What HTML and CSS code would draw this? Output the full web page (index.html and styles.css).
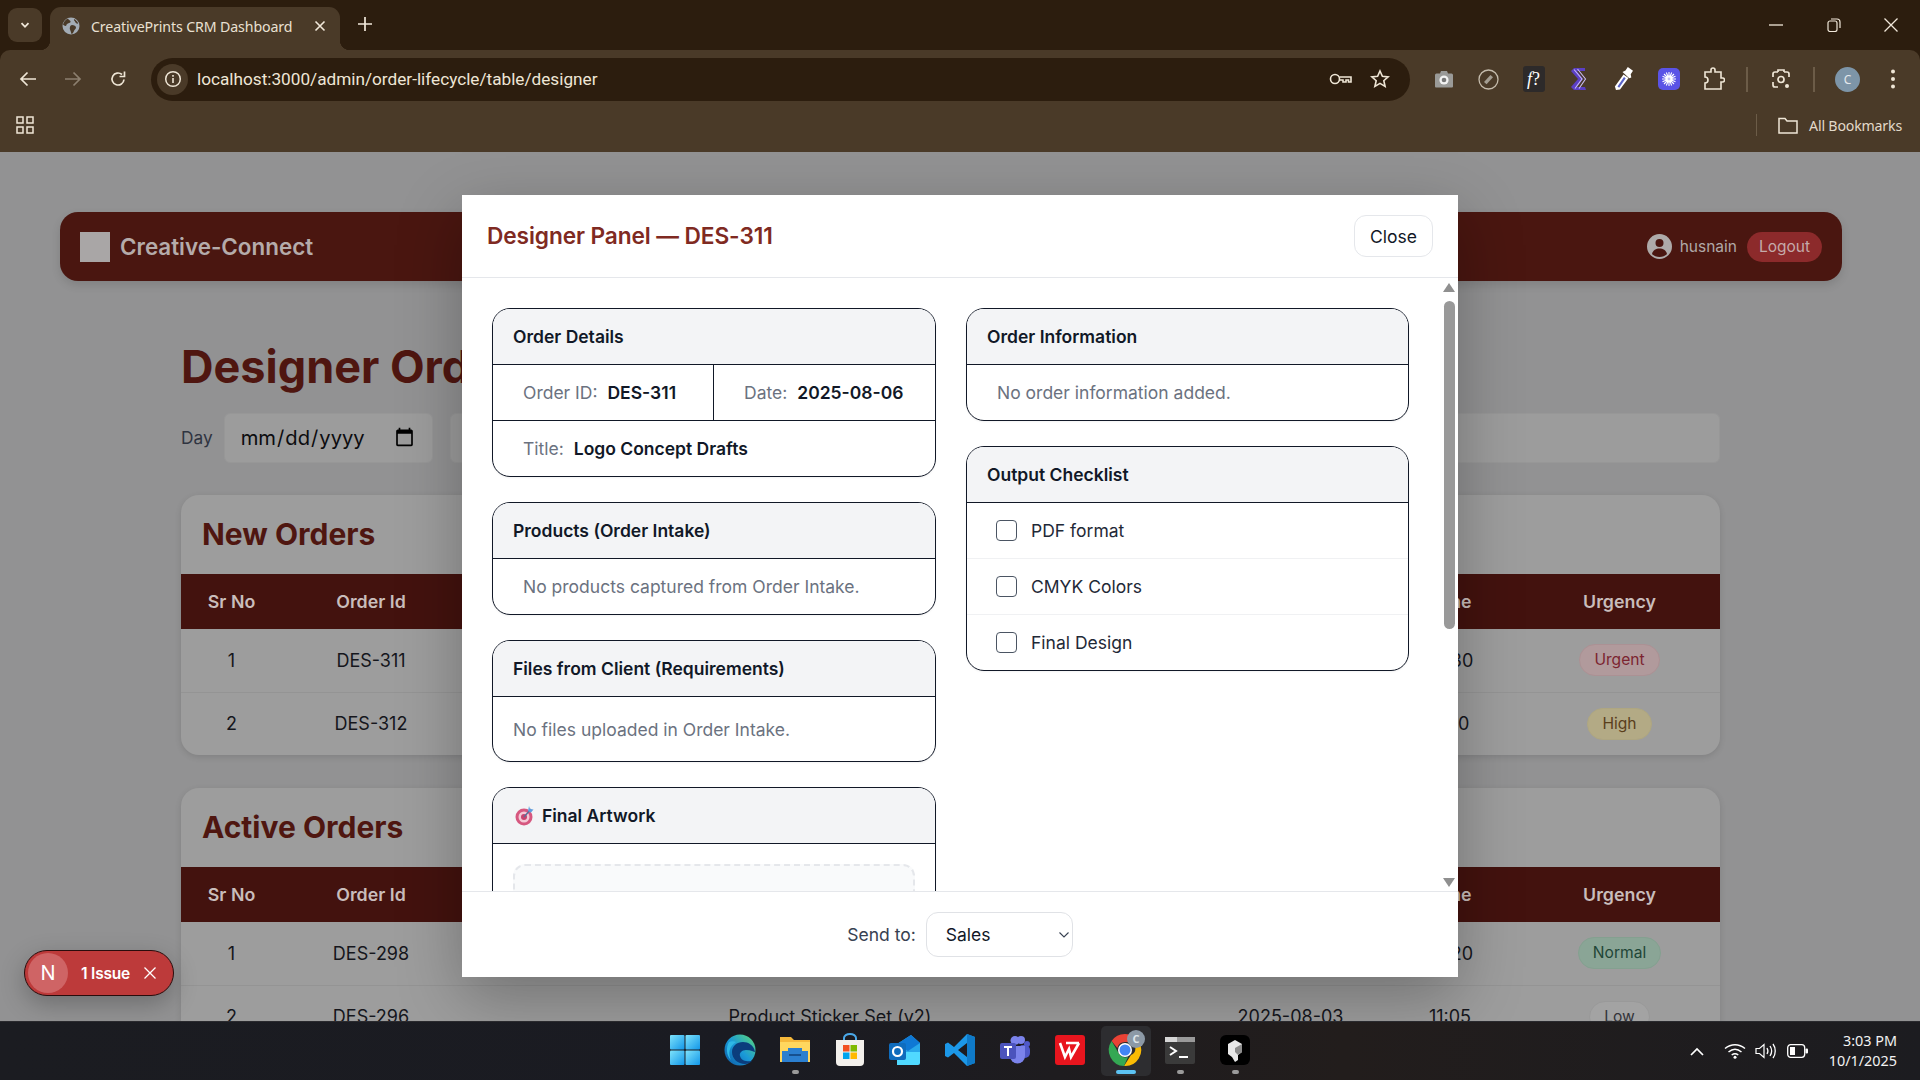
FILE: index.html
```html
<!DOCTYPE html>
<html lang="en">
<head>
<meta charset="utf-8">
<title>CreativePrints CRM Dashboard</title>
<link rel="stylesheet" href="styles.css">
</head>
<body>
<div class="window">
  <header class="browser">
    <div class="tabstrip">
      <button class="tabsearch"><svg width="12" height="12" viewBox="0 0 12 12"><path d="M2.5 4.2 6 7.8l3.5-3.6" fill="none" stroke="#f1e8da" stroke-width="1.8"/></svg></button>
      <div class="tab">
        <svg class="globe" width="18" height="18" viewBox="0 0 18 18"><circle cx="9" cy="9" r="8.5" fill="#a3acb5"/><path d="M6 1.5c1 2 3 2 2.5 3.5S5 6 4.500 8 2 8.500 1 7.500C1.500 5 3.500 2.500 6 1.500ZM10 8c2 0 4 1 4 2.500s-1.500 2-2 3.500-1.500 3-2.500 3c-.5-2-1-3-1.500-4.500S8 8 10 8ZM12 2c2 1 3.500 2.500 4.200 4.500-1.500.5-2.700-.5-3-1.500S11.500 3.500 12 2Z" fill="#4a3a28"/></svg>
        <span class="tabtitle">CreativePrints CRM Dashboard</span>
        <svg width="12" height="12" viewBox="0 0 12 12"><path d="m1.500 1.500 9 9m0-9-9 9" stroke="#f1e8da" stroke-width="1.600"/></svg>
      </div>
      <svg class="newtab" width="14" height="14" viewBox="0 0 14 14"><path d="M7 0v14M0 7h14" stroke="#f1e8da" stroke-width="1.700"/></svg>
      <div class="winctrls">
        <svg width="14" height="14" viewBox="0 0 14 14"><path d="M0 7h14" stroke="#f1e8da" stroke-width="1.300"/></svg>
        <svg width="14" height="14" viewBox="0 0 14 14"><rect x="1" y="3" width="9" height="10.500" rx="2" fill="none" stroke="#f1e8da" stroke-width="1.200"/><path d="M4 1h6c2 0 3 1 3 3v6" fill="none" stroke="#f1e8da" stroke-width="1.200"/></svg>
        <svg width="14" height="14" viewBox="0 0 14 14"><path d="m.5.500 13 13m0-13-13 13" stroke="#f1e8da" stroke-width="1.300"/></svg>
      </div>
    </div>
    <div class="toolbar">
      <span class="slot"><svg width="18" height="18" viewBox="0 0 18 18"><path d="M17 9H2m6.500-6.500L2 9l6.500 6.500" fill="none" stroke="#efe6d6" stroke-width="1.700"/></svg></span>
      <span class="slot"><svg width="18" height="18" viewBox="0 0 18 18"><path d="M1 9h15M9.500 2.500 16 9l-6.500 6.500" fill="none" stroke="#8c7f6f" stroke-width="1.700"/></svg></span>
      <span class="slot"><svg width="18" height="18" viewBox="0 0 18 18"><path d="M15 9.500A6 6 0 1 1 13 4.500" fill="none" stroke="#efe6d6" stroke-width="1.700"/><path d="M15.500 1.500v5h-5" fill="none" stroke="#efe6d6" stroke-width="1.700"/></svg></span>
      <div class="urlbar">
        <span class="infobtn"><svg width="18" height="18" viewBox="0 0 18 18"><circle cx="9" cy="9" r="7.300" fill="none" stroke="#efe6d6" stroke-width="1.500"/><path d="M9 8v5M9 5v1.700" stroke="#efe6d6" stroke-width="1.600"/></svg></span>
        <span class="url">localhost:3000/admin/order-lifecycle/table/designer</span>
        <svg class="keyicon" width="24" height="14" viewBox="0 0 24 14"><circle cx="6" cy="7" r="4.500" fill="none" stroke="#efe6d6" stroke-width="1.600"/><path d="M10.500 5H22v5h-2.500V8H17v2h-3V8h-3.500" fill="none" stroke="#efe6d6" stroke-width="1.600"/></svg>
        <svg class="staricon" width="20" height="20" viewBox="0 0 20 20"><path d="m10 2 2.400 5.300 5.700.6-4.300 3.800 1.300 5.700-5.100-3-5.100 3 1.300-5.700L1.900 7.900l5.700-.6Z" fill="none" stroke="#efe6d6" stroke-width="1.600"/></svg>
      </div>
      <span class="slot first"><svg width="20" height="18" viewBox="0 0 20 18"><path d="M1 5a1.500 1.500 0 0 1 1.500-1.500H6L7 1h6l1 2.500h3.500A1.500 1.500 0 0 1 19 5v11.500a1 1 0 0 1-1 1H2a1 1 0 0 1-1-1Z" fill="#9a9a98"/><circle cx="10" cy="10" r="4.600" fill="#f2f2f2"/><circle cx="10" cy="10" r="2.300" fill="#777"/></svg></span>
      <span class="slot"><svg width="21" height="21" viewBox="0 0 21 21"><circle cx="10.500" cy="10.500" r="9.500" fill="none" stroke="#c4bbac" stroke-width="1.300"/><path d="m6 13 6.500-7 2.500 2.300-6.500 7Z" fill="#a39d92"/></svg></span>
      <span class="slot"><span class="ext-f"><i>f</i>?</span></span>
      <span class="slot"><svg width="18" height="24" viewBox="0 0 18 24"><path d="M15 1H4L1 4l7 8-7 8 3 3h12l-1-3H7l6-8-6-8h8Z" fill="#5b3fc4"/><path d="M4 2.500 12 12l-7 9.500M7.500 2 15.500 12 9 21.500" fill="none" stroke="#c9bcf3" stroke-width="1.100"/></svg></span>
      <span class="slot"><svg width="20" height="24" viewBox="0 0 20 24"><path d="M2 23 .9 19.500 9.500 7.500l5 3.500-8.500 11.500Z" fill="#fff"/><path d="m3.500 19.500 6.500-9.500 1.700 1.200-6.500 9.500Z" fill="#5a63c9"/><path d="m8.500 5 3-1.500L13.800 0 19 3.700l-2.300 3.600.6 3.200-2 .7Z" fill="#fff"/></svg></span>
      <span class="slot"><svg width="22" height="22" viewBox="0 0 22 22"><rect width="22" height="22" rx="5" fill="#5a53e6"/><g stroke="#fff" stroke-width="1.100"><path d="M11 4v14M4 11h14M6 6l10 10M16 6 6 16M8.300 4.500l5.400 13M13.700 4.500l-5.400 13M4.500 8.300l13 5.400M17.500 8.300l-13 5.400"/></g><circle cx="11" cy="11" r="3.600" fill="#fff"/><circle cx="11" cy="11" r="1.400" fill="#5a53e6" opacity=".35"/></svg></span>
      <span class="slot"><svg width="22" height="24" viewBox="0 0 22 24"><path d="M2 5h6V3a2 2 0 0 1 4 0v2h6v6h1.500a2 2 0 0 1 0 4H18v7H2v-6a3 3 0 0 0 0-6Z" fill="none" stroke="#efe6d6" stroke-width="1.600"/></svg></span>
      <i class="sep"></i>
      <span class="slot"><svg width="20" height="22" viewBox="0 0 20 22"><path d="M7 4H4a2 2 0 0 0-2 2v3m16 0V6a2 2 0 0 0-2-2h-3M2 14v3a2 2 0 0 0 2 2h3" fill="none" stroke="#efe6d6" stroke-width="1.700"/><path d="M7 4V2h6v2" fill="none" stroke="#efe6d6" stroke-width="1.700"/><circle cx="10" cy="11.500" r="3" fill="none" stroke="#efe6d6" stroke-width="1.700"/><circle cx="16" cy="18" r="2" fill="#efe6d6"/></svg></span>
      <i class="sep"></i>
      <span class="slot"><span class="avatar">C</span></span>
      <span class="slot"><svg width="6" height="22" viewBox="0 0 6 22"><g fill="#efe6d6"><circle cx="3" cy="3.500" r="2"/><circle cx="3" cy="11" r="2"/><circle cx="3" cy="18.500" r="2"/></g></svg></span>
    </div>
    <div class="bookmarks">
      <svg class="apps" width="18" height="18" viewBox="0 0 18 18"><g fill="none" stroke="#efe6d6" stroke-width="1.500"><rect x="1" y="1" width="6" height="6"/><rect x="11" y="1" width="6" height="6"/><rect x="1" y="11" width="6" height="6"/><rect x="11" y="11" width="6" height="6"/></g></svg>
      <i class="bsep"></i>
      <svg width="20" height="17" viewBox="0 0 20 17"><path d="M1 1.500h6l2 2.500h10v12H1Z" fill="none" stroke="#efe6d6" stroke-width="1.500"/></svg>
      <span class="bmlabel">All Bookmarks</span>
    </div>
  </header>

  <main class="viewport">
    <div class="page">
      <nav class="appnav">
        <span class="logo"></span>
        <span class="brand">Creative-Connect</span>
        <span class="navuser">
          <svg width="25" height="25" viewBox="0 0 25 25"><circle cx="12.500" cy="12.500" r="12.500" fill="#aeaaa9"/><circle cx="12.500" cy="9" r="4" fill="#4a1610"/><path d="M5 20c1-4 4-5.500 7.500-5.500S19 16 20 20c-2 2-4.500 3-7.500 3S7 22 5 20Z" fill="#4a1610"/></svg>
          husnain
        </span>
        <button class="logout">Logout</button>
      </nav>
      <div class="content">
        <h1 class="pagetitle">Designer Orders</h1>
        <div class="filters">
          <label class="daylabel" for="day">Day</label>
          <input class="dayinput" id="day" type="date">
          <input class="searchinput" type="text" aria-label="Search">
        </div>
        <section class="ordercard">
          <h2 class="cardtitle">New Orders</h2>
          <table class="orders">
            <colgroup><col class="c1"><col class="c2"><col class="c3"><col class="c4"><col class="c5"><col class="c6"></colgroup>
            <thead><tr><th>Sr No</th><th>Order Id</th><th>Title</th><th>Date</th><th>Time</th><th>Urgency</th></tr></thead>
            <tbody>
              <tr><td>1</td><td>DES-311</td><td>Logo Concept Drafts</td><td>2025-08-06</td><td>14:30</td><td><span class="pill urgent">Urgent</span></td></tr>
              <tr><td>2</td><td>DES-312</td><td>Brochure Layout</td><td>2025-08-05</td><td>11:10</td><td><span class="pill high">High</span></td></tr>
            </tbody>
          </table>
        </section>
        <section class="ordercard">
          <h2 class="cardtitle">Active Orders</h2>
          <table class="orders">
            <colgroup><col class="c1"><col class="c2"><col class="c3"><col class="c4"><col class="c5"><col class="c6"></colgroup>
            <thead><tr><th>Sr No</th><th>Order Id</th><th>Title</th><th>Date</th><th>Time</th><th>Urgency</th></tr></thead>
            <tbody>
              <tr><td>1</td><td>DES-298</td><td>Business Card Redesign</td><td>2025-08-04</td><td>16:20</td><td><span class="pill normal">Normal</span></td></tr>
              <tr><td>2</td><td>DES-296</td><td>Product Sticker Set (v2)</td><td>2025-08-03</td><td>11:05</td><td><span class="pill low">Low</span></td></tr>
            </tbody>
          </table>
        </section>
      </div>
    </div>

    <div class="toast">
      <span class="toast-n">N</span>
      <span class="toast-text">1 Issue</span>
      <svg width="14" height="14" viewBox="0 0 14 14"><path d="m1.500 1.500 11 11m0-11-11 11" stroke="#fff" stroke-width="1.300"/></svg>
    </div>

    <div class="modal">
      <div class="modalhead">
        <h3 class="modaltitle">Designer Panel — DES-311</h3>
        <button class="closebtn">Close</button>
      </div>
      <div class="modalbody">
        <div class="column">
          <section class="panel">
            <div class="panelhead">Order Details</div>
            <div class="row split">
              <div class="cell"><span class="lbl">Order ID:</span><b>DES-311</b></div>
              <div class="cell"><span class="lbl">Date:</span><b>2025-08-06</b></div>
            </div>
            <div class="row"><div class="cell"><span class="lbl">Title:</span><b>Logo Concept Drafts</b></div></div>
          </section>
          <section class="panel">
            <div class="panelhead">Products (Order Intake)</div>
            <div class="row"><div class="cell muted">No products captured from Order Intake.</div></div>
          </section>
          <section class="panel">
            <div class="panelhead">Files from Client (Requirements)</div>
            <div class="row tall"><div class="cell muted tight">No files uploaded in Order Intake.</div></div>
          </section>
          <section class="panel">
            <div class="panelhead">
              <svg class="target" width="20" height="20" viewBox="0 0 20 20"><circle cx="9" cy="11" r="8.500" fill="#d6577f"/><circle cx="9" cy="11" r="5.500" fill="#f4c9d6"/><circle cx="9" cy="11" r="3" fill="#c8446f"/><path d="m9 11 7-8" stroke="#5a6f99" stroke-width="1.500"/><path d="m14 0 1 3 3.500.5-2.500 3L13 5Z" fill="#5f9fe0"/></svg>
              Final Artwork
            </div>
            <div class="dropwrap"><div class="dropzone"></div></div>
          </section>
        </div>
        <div class="column">
          <section class="panel">
            <div class="panelhead">Order Information</div>
            <div class="row"><div class="cell muted">No order information added.</div></div>
          </section>
          <section class="panel">
            <div class="panelhead">Output Checklist</div>
            <label class="check"><input type="checkbox"><span>PDF format</span></label>
            <label class="check"><input type="checkbox"><span>CMYK Colors</span></label>
            <label class="check"><input type="checkbox"><span>Final Design</span></label>
          </section>
        </div>
        <div class="fakescroll">
          <i class="arrow up"></i>
          <i class="thumb"></i>
          <i class="arrow down"></i>
        </div>
      </div>
      <div class="modalfoot">
        <label class="sendlabel" for="send">Send to:</label>
        <span class="selectwrap">
          <select class="sendselect" id="send"><option>Sales</option></select>
          <svg class="chev" width="10" height="6" viewBox="0 0 10 6"><path d="m.5.500 4.500 4.500L9.500.500" fill="none" stroke="#374151" stroke-width="1.100"/></svg>
        </span>
      </div>
    </div>
  </main>

  <footer class="taskbar">
    <div class="tbicons">
      <span class="tbi"><svg width="32" height="32" viewBox="0 0 32 32"><defs><linearGradient id="win" x1="0" y1="0" x2="1" y2="1"><stop offset="0" stop-color="#7ee3fb"/><stop offset="1" stop-color="#1296e8"/></linearGradient></defs><rect x="1" y="1" width="14.500" height="14.500" rx="1" fill="url(#win)"/><rect x="16.500" y="1" width="14.500" height="14.500" rx="1" fill="url(#win)"/><rect x="1" y="16.500" width="14.500" height="14.500" rx="1" fill="url(#win)"/><rect x="16.500" y="16.500" width="14.500" height="14.500" rx="1" fill="url(#win)"/></svg></span>
      <span class="tbi"><svg width="32" height="32" viewBox="0 0 32 32"><defs><linearGradient id="edge" x1="0" y1="1" x2="1" y2="0"><stop offset="0" stop-color="#0c59a4"/><stop offset=".5" stop-color="#1a9ad8"/><stop offset="1" stop-color="#5fdb73"/></linearGradient></defs><circle cx="16" cy="16" r="15.500" fill="url(#edge)"/><path d="M31 18c-1-7-7-10-12-10-6 0-11 4-11 10 0 7 6 12 13 12 3 0 5-1 7-3-4 1-11 0-12-5-1-3 2-6 6-6 5 0 8 2 9 2Z" fill="#0b3d7d"/><path d="M5 8c-3 5-3 13 2 18-3-6-2-14 5-18-2-1-5-1-7 0Z" fill="#2fb8e6"/></svg></span>
      <span class="tbi dot"><svg width="32" height="32" viewBox="0 0 32 32"><path d="M1 3h11l3 3h16v22H1Z" fill="#f6b93b"/><path d="M1 8h30v20H1Z" fill="#ffd75e"/><path d="M9 17h14v3H29v11H3V20h6Z" transform="translate(0 -3)" fill="#2b7fd0"/><rect x="10" y="20" width="12" height="2" fill="#16508f"/></svg></span>
      <span class="tbi"><svg width="32" height="34" viewBox="0 0 32 34"><path d="M10 8V5a6 4 0 0 1 12 0v3" fill="none" stroke="#4aa8e8" stroke-width="2"/><path d="M2 7h28v22a4 4 0 0 1-4 4H6a4 4 0 0 1-4-4Z" fill="#f3f0ec"/><rect x="9" y="12" width="6.500" height="6.500" fill="#f25022"/><rect x="16.500" y="12" width="6.500" height="6.500" fill="#7fba00"/><rect x="9" y="19.500" width="6.500" height="6.500" fill="#00a4ef"/><rect x="16.500" y="19.500" width="6.500" height="6.500" fill="#ffb900"/></svg></span>
      <span class="tbi"><svg width="32" height="32" viewBox="0 0 32 32"><path d="M8 10 22 1l9 8v20H8Z" fill="#28a8ea"/><path d="m8 10 14-9 9 8-12 8Z" fill="#0f78d4"/><path d="M8 18h23v11a2 2 0 0 1-2 2H8Z" fill="#50d9ff"/><rect x="0" y="9" width="17" height="17" rx="2" fill="#0f6cbd"/><circle cx="8.500" cy="17.500" r="4.500" fill="none" stroke="#fff" stroke-width="2.200"/></svg></span>
      <span class="tbi"><svg width="32" height="34" viewBox="0 0 32 34"><path fill-rule="evenodd" d="M23 1 10 14 4 9.500 1 11v12l3 1.500L10 20l13 13 8-3V4ZM23 10l-9 7 9 7Z" fill="#1c98e8"/><path d="M23 1v32l8-3V4Z" fill="#0f7ac8"/></svg></span>
      <span class="tbi"><svg width="32" height="32" viewBox="0 0 32 32"><circle cx="22" cy="6" r="4" fill="#7b83eb"/><circle cx="28" cy="10" r="3" fill="#5059c9"/><rect x="19" y="11" width="12" height="13" rx="5" fill="#5059c9"/><path d="M11 12h15v10a7 7 0 0 1-15 0Z" fill="#7b83eb"/><circle cx="16" cy="6.500" r="4.500" fill="#7b83eb"/><rect x="1" y="9" width="16" height="16" rx="2" fill="#4b53bc"/><path d="M5 13h8M9 13v9" stroke="#fff" stroke-width="2"/></svg></span>
      <span class="tbi"><svg width="30" height="30" viewBox="0 0 30 30"><rect width="30" height="30" rx="3" fill="#e8151e"/><path d="m5 8 5 14 4-8 2 8 8-14M11 8h13" fill="none" stroke="#fff" stroke-width="2.600"/></svg></span>
      <span class="tbi active"><svg width="40" height="40" viewBox="0 0 40 40"><g transform="translate(4 4)"><path d="M16 0a16 16 0 0 1 14 8H16a8 8 0 0 0-7.700 6L2.600 7A16 16 0 0 1 16 0Z" fill="#e94235"/><path d="M30 8a16 16 0 0 1-15 24l7-11a7 7 0 0 0 0-13Z" fill="#fbbc04"/><path d="M2.600 7 9 18a8 8 0 0 0 10 5l-4 9A16 16 0 0 1 2.600 7Z" fill="#34a853"/><circle cx="16" cy="16" r="7" fill="#fff"/><circle cx="16" cy="16" r="5.500" fill="#4285f4"/></g><circle cx="31" cy="9" r="9" fill="#8c99a6"/><text class="badge-c" x="31" y="13">C</text></svg></span>
      <span class="tbi dot"><svg width="32" height="32" viewBox="0 0 32 32"><rect x="1" y="3" width="30" height="27" rx="2" fill="#3a3a3a"/><rect x="1" y="3" width="30" height="5" fill="#9a9a9a"/><rect x="1" y="3" width="12" height="5" fill="#d6d6d6"/><path d="m6 13 6 4-6 4" fill="none" stroke="#fff" stroke-width="2"/><path d="M15 23h9" stroke="#fff" stroke-width="2"/></svg></span>
      <span class="tbi dot"><svg width="32" height="32" viewBox="0 0 32 32"><rect x="1" y="1" width="30" height="30" rx="6" fill="#000"/><path d="m16 6 7 4v8l-4 3v5l-3 2-3-5-4-3v-10Z" fill="#e9e9e9"/><path d="m16 14 7-4v8l-4 3-3-3Z" fill="#8d8d8d"/></svg></span>
    </div>
    <div class="tray">
      <svg width="14" height="9" viewBox="0 0 14 9"><path d="m1 8 6-6 6 6" fill="none" stroke="#fff" stroke-width="1.700"/></svg>
      <svg class="wifi" width="22" height="16" viewBox="0 0 22 16"><g fill="none" stroke="#fff" stroke-width="1.500"><path d="M1 5.500c6-5 14-5 20 0"/><path d="M4.500 9c4-3.500 9-3.500 13 0"/><path d="M7.700 12c2-1.500 4.600-1.500 6.600 0"/></g><circle cx="11" cy="14.300" r="1.500" fill="#fff"/></svg>
      <svg class="vol" width="22" height="16" viewBox="0 0 22 16"><path d="M1 5.500h3.500L9 1.500v13l-4.500-4H1Z" fill="none" stroke="#fff" stroke-width="1.200"/><path d="M12 5c1.200 2 1.200 4 0 6M15 3c2 3 2 7 0 10M18 1c3 4 3 10 0 14" fill="none" stroke="#fff" stroke-width="1.300"/></svg>
      <svg class="batt" width="21" height="14" viewBox="0 0 21 14"><rect x=".7" y=".7" width="17" height="12.600" rx="3" fill="none" stroke="#fff" stroke-width="1.300"/><rect x="3" y="3" width="5" height="8" fill="#fff"/><rect x="18.500" y="4.500" width="2.500" height="5" rx="1" fill="#fff"/></svg>
      <div class="clock"><span>3:03 PM</span><span>10/1/2025</span></div>
    </div>
  </footer>
</div>
</body>
</html>
```
FILE: styles.css
```css
* { box-sizing: border-box; }
html, body { margin: 0; height: 100%; overflow: hidden; }
body { font-family: "Inter", "Liberation Sans", sans-serif; }
button { font-family: inherit; }
.window { display: flex; flex-direction: column; height: 100vh; }

/* Browser chrome */
.browser { flex: none; background: #2c1d0e; font-family: "Noto Sans", "Open Sans", sans-serif; color: #efe6d6; }
.tabstrip { height: 50px; display: flex; align-items: flex-end; padding-left: 8px; position: relative; }
.tabsearch { width: 34px; height: 34px; margin-bottom: 8px; background: #4a3a28; border: 0; border-radius: 9px; display: flex; align-items: center; justify-content: center; padding: 0; }
.tab { width: 290px; height: 43px; margin-left: 8px; background: #4a3a28; border-radius: 11px 11px 0 0; display: flex; align-items: center; padding: 0 14px 5px 12px; gap: 11px; position: relative; }
.tab::before, .tab::after { content: ""; position: absolute; bottom: 0; width: 10px; height: 10px; }
.tab::before { left: -10px; background: radial-gradient(circle at 0 0, transparent 10px, #4a3a28 10.500px); }
.tab::after { right: -10px; background: radial-gradient(circle at 100% 0, transparent 10px, #4a3a28 10.500px); }
.globe { flex: none; }
.tabtitle { flex: 1; font-size: 14.200px; color: #e9e0d2; white-space: nowrap; letter-spacing: -.12px; }
.newtab { margin: 0 0 19px 18px; }
.winctrls { margin-left: auto; width: 172px; padding: 0 22px 0 21px; display: flex; justify-content: space-between; margin-bottom: 18px; }
.toolbar { height: 52px; background: #4a3a28; border-radius: 10px 10px 0 0; display: flex; align-items: center; padding: 6px 0 0 5px; }
.slot { width: 45px; height: 36px; display: flex; align-items: center; justify-content: center; flex: none; }
.slot.first { margin-left: 11px; }
.urlbar { width: 1259px; height: 43px; margin: 0 0 0 11px; border-radius: 22px; background: #2c1d0e; display: flex; align-items: center; padding: 0 20px 0 6px; }
.infobtn { width: 31px; height: 31px; border-radius: 50%; background: #4a3a28; display: flex; align-items: center; justify-content: center; }
.url { flex: 1; font-family: "Roboto", sans-serif; font-size: 17.200px; color: #efe6d6; margin-left: 9px; }
.keyicon { margin-right: 17px; }
.ext-f { width: 22px; height: 26px; background: #2d2a2a; border-radius: 3px; color: #fff; font: 400 18px "Liberation Serif", serif; display: flex; align-items: center; justify-content: center; }
.sep { width: 2px; height: 25px; background: #6c5c48; margin: 0 10px 0 10px; flex: none; }
.avatar { width: 25px; height: 25px; border-radius: 50%; background: #7d95a8; color: #e4e8ec; font-size: 12px; display: flex; align-items: center; justify-content: center; }
.bookmarks { height: 50px; background: #4a3a28; display: flex; align-items: center; padding: 0 18px 4px 16px; }
.apps { margin-right: auto; }
.bsep { width: 1px; height: 22px; background: #6c5c48; margin-right: 21px; }
.bmlabel { font-size: 14.200px; color: #e2d9ca; margin-left: 11px; letter-spacing: -.2px; }

/* Dimmed page */
.viewport { flex: 1; position: relative; overflow: hidden; background: #929293; min-height: 0; }
.page { padding: 60px 78px 0 60px; }
.appnav { height: 69px; background: #4a1610; border-radius: 18px; display: flex; align-items: center; padding: 0 20px; box-shadow: 0 4px 10px rgba(0,0,0,.12); }
.logo { width: 30px; height: 30px; background: #a9a6a6; }
.brand { margin-left: 10px; font-size: 22.400px; font-weight: 600; color: #b5abaa; }
.navuser { margin-left: auto; display: flex; align-items: center; gap: 8px; font-size: 15.500px; color: #b0a8a7; }
.logout { margin-left: 10px; width: 75px; height: 30px; border: 0; border-radius: 15px; background: #8c2a2b; color: #c5aaaa; font-size: 15.500px; padding: 0; }
.content { padding: 0 122px 0 121px; }
.pagetitle { margin: 59px 0 0; font-size: 45px; line-height: 54px; font-weight: 700; color: #4f1610; white-space: nowrap; }
.filters { margin-top: 19px; display: flex; align-items: center; height: 50px; }
.daylabel { font-size: 17.300px; color: #2f3441; margin: 0 11px 2px 0; }
.dayinput { width: 209px; height: 50px; border: 1px solid #979797; border-radius: 6px; background: #9c9c9c; padding: 0 15px 1px; font: 20.200px "Inter", sans-serif; color: #0c0c0f; }
.searchinput { flex: 1; height: 50px; margin-left: 17px; border: 1px solid #979797; border-radius: 6px; background: #9c9c9c; }
.ordercard { margin-top: 32px; background: #9d9d9d; border-radius: 18px; overflow: hidden; box-shadow: 0 2px 6px rgba(0,0,0,.12); }
.ordercard + .ordercard { margin-top: 33px; }
.cardtitle { height: 79px; margin: 0; padding: 0 21px 2px; display: flex; align-items: center; font-size: 30px; font-weight: 700; color: #4f1610; }
.orders { width: 100%; table-layout: fixed; border-collapse: collapse; }
.c1 { width: 101px; } .c2 { width: 178px; } .c3 { width: 740px; } .c4 { width: 181px; } .c5 { width: 138px; } .c6 { width: 201px; }
.orders th { height: 55px; background: #43120e; color: #c9bdbb; font-size: 17.800px; font-weight: 600; text-align: center; padding: 0; }
.orders td { height: 63px; padding: 0; text-align: center; font-size: 18px; color: #15161c; border-bottom: 1px solid #949494; }
.orders tr:last-child td { border-bottom: 0; }
.pill { display: inline-block; padding: 0 14px; height: 32px; line-height: 30px; border-radius: 16px; font-size: 15.600px; border: 1px solid; }
.urgent { background: #b19a9c; border-color: #ab9194; color: #7c2430; }
.high { background: #b3aa85; border-color: #aea681; color: #5a3f1c; }
.normal { background: #8aa596; border-color: #84a090; color: #1f4636; }
.low { background: #a3a3a3; border-color: #999; color: #33343a; }

/* Issue toast */
.toast { position: absolute; left: 24px; top: 798px; z-index: 3; width: 150px; height: 46px; border-radius: 23px; background: #bd3a3a; border: 1.500px solid #2a0c0c; display: flex; align-items: center; padding-left: 3px; color: #fff; box-shadow: 0 8px 24px rgba(0,0,0,.25); }
.toast-n { width: 40px; height: 40px; border-radius: 50%; background: #cf6465; display: flex; align-items: center; justify-content: center; font-size: 20px; font-weight: 400; }
.toast-text { margin: 0 13px 0 13px; font-size: 15.500px; font-weight: 600; white-space: nowrap; letter-spacing: -.2px; }

/* Designer modal */
.modal { position: absolute; left: 462px; top: 43px; z-index: 2; width: 996px; height: 782px; background: #fff; display: flex; flex-direction: column; box-shadow: 0 20px 60px rgba(0,0,0,.28); }
.modalhead { flex: none; height: 83px; border-bottom: 1px solid #e5e7eb; display: flex; align-items: center; justify-content: space-between; padding: 0 25px 0 25px; }
.modaltitle { margin: 0 0 2px; font-size: 22.700px; font-weight: 600; color: #7f2a22; white-space: nowrap; letter-spacing: -.1px; }
.closebtn { width: 79px; height: 42px; border: 1px solid #e5e7eb; border-radius: 12px; background: #fff; font-size: 17.500px; color: #111827; padding: 0; }
.modalbody { flex: 1; min-height: 0; position: relative; overflow: hidden; display: grid; grid-template-columns: 444px 443px; column-gap: 30px; align-items: start; padding: 30px 0 0 30px; }
.column { display: flex; flex-direction: column; gap: 25px; }
.panel { border: 1px solid #111827; border-radius: 18px; overflow: hidden; background: #fff; box-shadow: 0 1px 2px rgba(0,0,0,.05); }
.panelhead { height: 56px; background: #f3f4f6; border-bottom: 1px solid #111827; display: flex; align-items: center; padding-left: 20px; font-size: 17.500px; font-weight: 600; color: #111827; }
.row { display: flex; min-height: 56px; border-bottom: 1px solid #111827; }
.panel > .row:last-child { border-bottom: 0; min-height: 55px; }
.panel > .row.tall:last-child { min-height: 64px; }
.split .cell:first-child { width: 221px; flex: none; border-right: 1px solid #111827; }
.cell { flex: 1; display: flex; align-items: center; padding-left: 30px; font-size: 17.500px; color: #111827; white-space: nowrap; }
.lbl { color: #6b7280; margin-right: 10px; font-weight: 400; }
.cell b { font-weight: 600; }
.cell.muted { color: #6b7280; }
.cell.tight { padding-left: 20px; }
.target { margin: 0 7px 0 2px; }
.dropwrap { padding: 20px; height: 200px; }
.dropzone { height: 160px; background: #f9fafb; border: 2px dashed #e5e7eb; border-radius: 12px; }
.check { display: flex; align-items: center; height: 56px; padding-left: 29px; gap: 14px; font-size: 17.500px; color: #1f2937; border-bottom: 1px solid #f0f1f3; }
.check:last-child { border-bottom: 0; height: 55px; }
.check input { appearance: none; width: 21px; height: 21px; margin: 0; border: 1.500px solid #4b5563; border-radius: 4px; background: #fff; }
.fakescroll { position: absolute; right: 3px; top: 5px; bottom: 4px; width: 12px; display: flex; flex-direction: column; align-items: center; gap: 9px; }
.thumb { width: 11px; height: 328px; border-radius: 6px; background: #999; }
.arrow { width: 12px; height: 9px; background: #8f8f8f; flex: none; }
.arrow.up { clip-path: polygon(50% 0, 100% 100%, 0 100%); }
.arrow.down { clip-path: polygon(0 0, 100% 0, 50% 100%); margin-top: auto; }
.modalfoot { flex: none; height: 86px; border-top: 1px solid #e5e7eb; display: flex; align-items: center; justify-content: center; gap: 10px; }
.sendlabel { font-size: 17.500px; color: #374151; }
.selectwrap { position: relative; display: flex; }
.sendselect { appearance: none; width: 147px; height: 45px; border: 1px solid #e0e2e6; border-radius: 12px; background: #fff; padding-left: 19px; font: 17.500px "Inter", sans-serif; color: #111827; }
.chev { position: absolute; right: 4px; top: 20px; pointer-events: none; }

/* Windows taskbar */
.taskbar { flex: none; height: 59px; background: linear-gradient(90deg, #1b1c21 0%, #1a1b22 40%, #221d1c 70%, #1c1c20 100%); border-top: 1px solid #2a2a2e; display: flex; position: relative; }
.tbicons { position: absolute; left: 657.500px; top: 0; display: flex; height: 58px; }
.tbi { width: 55px; height: 58px; padding-bottom: 2px; display: flex; align-items: center; justify-content: center; position: relative; flex: none; }
.tbi.dot::after { content: ""; position: absolute; left: 24px; bottom: 6px; width: 7px; height: 4px; border-radius: 2px; background: #9a9a9a; }
.tbi.active::before { content: ""; position: absolute; left: 3px; top: 4px; width: 50px; height: 50px; border-radius: 5px; background: #2d2d30; }
.tbi.active::after { content: ""; position: absolute; left: 18px; bottom: 6px; width: 20px; height: 4px; border-radius: 2px; background: #5cc3f3; }
.tbi.active svg { position: relative; }
.badge-c { font: 700 11px "Open Sans", sans-serif; fill: #dfe5ea; text-anchor: middle; }
.tray { margin-left: auto; display: flex; align-items: center; padding-right: 23px; color: #fff; }
.wifi { margin-left: 20px; } .vol { margin-left: 9px; } .batt { margin-left: 10px; }
.clock { margin-left: 21px; display: flex; flex-direction: column; align-items: flex-end; font-family: "Noto Sans", sans-serif; font-size: 14.400px; line-height: 20px; color: #f2f2f2; }
```
